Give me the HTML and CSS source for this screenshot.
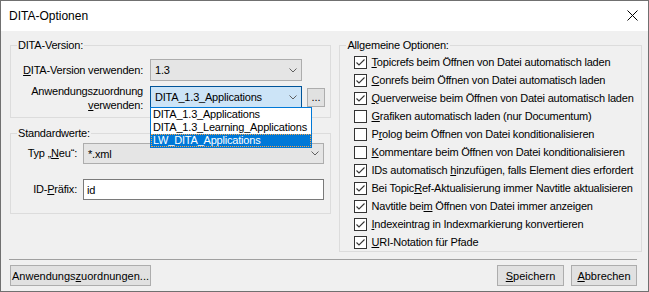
FILE: index.html
```html
<!DOCTYPE html>
<html>
<head>
  <meta charset="utf-8">
  <title>DITA-Optionen</title>
  <link rel="stylesheet" href="styles.css">
</head>
<body>
<div class="dialog">
  <div class="titlebar">
    <span class="title">DITA-Optionen</span>
    <svg class="close" width="11" height="11" viewBox="0 0 11 11">
      <path d="M0.5 0.5 L10.5 10.5 M10.5 0.5 L0.5 10.5" stroke="#000" stroke-width="1" fill="none"/>
    </svg>
  </div>

  <div class="content">
    <div class="left">
      <fieldset class="group version">
        <legend>DITA-Version:</legend>
        <div class="row">
          <label class="lbl"><u>D</u>ITA-Version verwenden:</label>
          <div class="combo">
            <span>1.3</span>
            <svg width="8" height="5" viewBox="0 0 8 5"><path d="M0.5 0.5 L4 4 L7.5 0.5" stroke="#606060" fill="none"/></svg>
          </div>
        </div>
        <div class="row app-row">
          <label class="lbl">Anwendungszuordnung<br><u>v</u>erwenden:</label>
          <div class="combo focus">
            <span>DITA_1.3_Applications</span>
            <svg width="8" height="5" viewBox="0 0 8 5"><path d="M0.5 0.5 L4 4 L7.5 0.5" stroke="#606060" fill="none"/></svg>
          </div>
          <button class="dots">...</button>
          <!-- open list of the combo -->
          <ul class="dropdown">
            <li>DITA_1.3_Applications</li>
            <li>DITA_1.3_Learning_Applications</li>
            <li class="sel">LW_DITA_Applications</li>
          </ul>
        </div>
      </fieldset>

      <fieldset class="group defaults">
        <legend>Standardwerte:</legend>
        <div class="row">
          <label class="lbl">Typ „<u>N</u>eu“:</label>
          <div class="combo">
            <span>*.xml</span>
            <svg width="8" height="5" viewBox="0 0 8 5"><path d="M0.5 0.5 L4 4 L7.5 0.5" stroke="#606060" fill="none"/></svg>
          </div>
        </div>
        <div class="row">
          <label class="lbl">ID-<u>P</u>räfix:</label>
          <div class="textbox">id</div>
        </div>
      </fieldset>
    </div>

    <fieldset class="group general">
      <legend>Allgemeine Optionen:</legend>
      <ul class="checks">
        <li><span class="box on"></span><span><u>T</u>opicrefs beim Öffnen von Datei automatisch laden</span></li>
        <li><span class="box on"></span><span><u>C</u>onrefs beim Öffnen von Datei automatisch laden</span></li>
        <li><span class="box on"></span><span><u>Q</u>uerverweise beim Öffnen von Datei automatisch laden</span></li>
        <li><span class="box"></span><span><u>G</u>rafiken automatisch laden (nur Documentum)</span></li>
        <li><span class="box"></span><span>P<u>r</u>olog beim Öffnen von Datei konditionalisieren</span></li>
        <li><span class="box"></span><span><u>K</u>ommentare beim Öffnen von Datei konditionalisieren</span></li>
        <li><span class="box on"></span><span>IDs automatisch <u>h</u>inzufügen, falls Element dies erfordert</span></li>
        <li><span class="box on"></span><span>Bei Topic<u>R</u>ef-Aktualisierung immer Navtitle aktualisieren</span></li>
        <li><span class="box on"></span><span>Navtitle bei<u>m</u> Öffnen von Datei immer anzeigen</span></li>
        <li><span class="box on"></span><span><u>I</u>ndexeintrag in Indexmarkierung konvertieren</span></li>
        <li><span class="box on"></span><span><u>U</u>RI-Notation für Pfade</span></li>
      </ul>
    </fieldset>
  </div>

  <div class="sep"></div>
  <div class="buttons">
    <button class="btn btn-map">Anwendungs<u>z</u>uordnungen...</button>
    <button class="btn btn-save"><u>S</u>peichern</button>
    <button class="btn btn-cancel"><u>A</u>bbrechen</button>
  </div>
</div>
</body>
</html>
```

FILE: styles.css
```css
* {
  box-sizing: border-box;
}

body {
  margin: 0;
  font-family: "Liberation Sans", Arial, sans-serif;
  font-size: 11px;
  letter-spacing: -0.2px;
  color: #000;
}

.dialog {
  width: 649px;
  height: 292px;
  border: 1px solid #707070;
  background: #f0f0f0;
  display: flex;
  flex-direction: column;
}

.titlebar {
  height: 30px;
  flex: none;
  background: #fff;
  display: flex;
  align-items: center;
  padding: 0 10px 0 8px;
}

.title {
  font-size: 12px;
  letter-spacing: 0;
}

.close {
  margin-left: auto;
  margin-top: -2px;
}

.content {
  display: flex;
  gap: 8px;
  padding: 7px 6px 0 9px;
}

.left {
  width: 322px;
  display: flex;
  flex-direction: column;
  gap: 8px;
}

.group {
  margin: 0;
  padding: 0;
  min-width: 0;
  border: 1px solid #dcdcdc;
}

.group legend {
  margin-left: 6px;
  padding: 0 1px;
  line-height: 14px;
}

.version {
  padding: 7px 0 9px;
}

.defaults {
  padding: 3px 0 13px;
}

.row {
  display: flex;
  align-items: center;
  height: 22px;
}

.row + .row {
  margin-top: 5px;
}

.lbl {
  flex: none;
  width: 132px;
  margin-right: 7px;
  text-align: right;
  line-height: 13px;
}

.app-row .lbl {
  line-height: 14px;
  margin-top: 1px;
}

.combo {
  flex: none;
  width: 152px;
  height: 22px;
  display: flex;
  align-items: center;
  padding: 0 4px;
  border: 1px solid #adadad;
  background: #e5e5e5;
  white-space: nowrap;
}

.combo svg {
  margin-left: auto;
}

.combo.focus {
  background: #cce4f7;
  border-color: #005499;
}

.dots {
  width: 18px;
  height: 19px;
  margin-left: 5px;
  padding: 0 0 3px;
  font: inherit;
  line-height: 1;
  border: 1px solid #adadad;
  background: #e1e1e1;
  display: flex;
  align-items: flex-end;
  justify-content: center;
}

.app-row {
  position: relative;
}

.dropdown {
  position: absolute;
  left: 139px;
  top: 21px;
  width: 162px;
  margin: 0;
  padding: 0;
  list-style: none;
  background: #fff;
  border: 1px solid #0078d7;
  z-index: 2;
}

.dropdown li {
  height: 13px;
  line-height: 13px;
  padding-left: 2px;
  white-space: nowrap;
}

.dropdown .sel {
  background: #0078d7;
  color: #fff;
  outline: 1px dotted #f5a54a;
  outline-offset: -1px;
}

.defaults .row {
  height: 21px;
}

.defaults .row + .row {
  margin-top: 15px;
}

.defaults .lbl {
  width: 66px;
  margin-right: 6px;
}

.defaults .combo {
  width: 241px;
  height: 21px;
}

.textbox {
  width: 241px;
  height: 21px;
  padding: 0 3px;
  display: flex;
  align-items: center;
  border: 1px solid #7a7a7a;
  background: #fff;
}

.general {
  width: 303px;
}

.checks {
  list-style: none;
  margin: 0;
  padding: 1px 0 0 14px;
}

.checks li {
  height: 18px;
  display: flex;
  align-items: center;
  gap: 4px;
  white-space: nowrap;
}

.box {
  flex: none;
  width: 13px;
  height: 13px;
  border: 1px solid #333;
  background: #fff;
}

.box.on {
  background: #fff url("data:image/svg+xml,%3Csvg xmlns='http://www.w3.org/2000/svg' width='11' height='11' viewBox='0 0 11 11'%3E%3Cpath d='M1.5 5.5 L4 8 L9.5 2.5' stroke='%23333' stroke-width='1.1' fill='none'/%3E%3C/svg%3E") no-repeat 0 0;
}

.sep {
  height: 1px;
  margin: 7px 11px 0 8px;
  background: #a0a0a0;
}

.buttons {
  display: flex;
  gap: 7px;
  padding: 5px 11px 0 9px;
}

.btn {
  height: 21px;
  padding: 0;
  font: inherit;
  color: #000;
  border: 1px solid #adadad;
  background: #e1e1e1;
}

.btn-map {
  width: 141px;
  margin-right: auto;
}

.btn-save {
  width: 67px;
}

.btn-cancel {
  width: 66px;
}
```
